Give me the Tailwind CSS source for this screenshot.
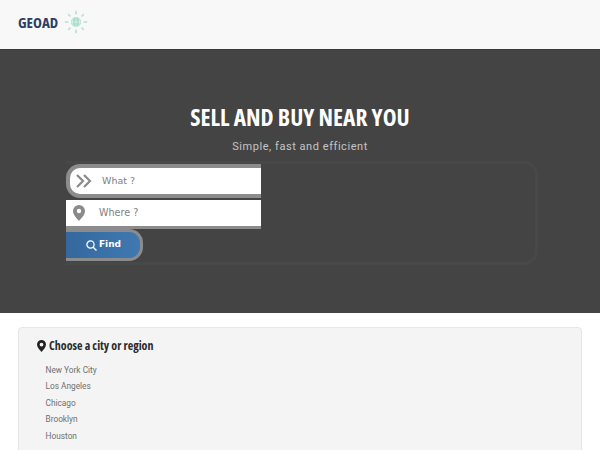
<!DOCTYPE html>
<html lang="en">
<head>
    <meta charset="UTF-8">
    <title>Geoad</title>
    <script src="https://cdn.jsdelivr.net/npm/@tailwindcss/browser@4"></script>
</head>
<body class="bg-white font-['Roboto',sans-serif] h-[450px] overflow-hidden">
    <!-- Header -->
    <div class="h-[49px] bg-[#f8f8f8] flex items-center pb-[5px] pl-[18px] gap-[6px]">
        <span class="font-['Open_Sans',sans-serif] [font-stretch:75%] font-bold text-[15px] text-[#2c3e63] leading-none">GEOAD</span>
        <svg width="24" height="24" viewBox="0 0 26 26" fill="none" stroke="#b5e2d2" stroke-width="1.800" stroke-linecap="round">
            <circle cx="13" cy="13" r="5.500" fill="#a5dcc9" stroke="none"/>
            <path d="M7.500 13h11M13 7.500v11M10 9c-1.500 2.500-1.500 5.500 0 8M16 9c1.500 2.500 1.500 5.500 0 8" stroke="#eef8f4" stroke-width=".7"/>
            <path d="M13 1.500v2.500M13 22v2.500M1.500 13h2.500M22 13h2.500M5 5l1.500 1.500M19.500 19.500L21 21M21 5l-1.500 1.500M6.500 19.500L5 21"/>
        </svg>
    </div>

    <!-- Hero -->
    <div class="h-[264px] bg-[#444444] border-t border-[#3a3a3a] flex flex-col items-center">
        <h1 class="mt-[52px] font-['Open_Sans',sans-serif] [font-stretch:75%] font-bold text-[23.400px] leading-[30px] text-white">SELL AND BUY NEAR YOU</h1>
        <p class="mt-[6px] font-['Roboto',sans-serif] text-[11px] tracking-[0.55px] leading-[18px] text-[#c4c4c4]">Simple, fast and efficient</p>

        <!-- Search form -->
        <div class="mt-[5px] w-[472px] h-[104px] border-[3px] border-l-0 border-[#464947] rounded-r-[14px] flex flex-col items-start self-start ml-[66px]">
            <div class="w-[195px] h-[34px] bg-white border-[4px] border-r-0 border-[#8c8c8c] rounded-l-[14px] flex items-center pl-[6px] gap-[10px]">
                <svg width="16" height="14" viewBox="0 0 16 14" fill="none" stroke="#8a8a8a" stroke-width="2.200">
                    <path d="M1 1l6 6-6 6M8 1l6 6-6 6"/>
                </svg>
                <span class="font-['DejaVu_Sans',sans-serif] text-[9.500px] text-[#808080]">What ?</span>
            </div>
            <div class="mt-[2px] w-[195px] h-[29px] bg-white border-b-[3px] border-[#8c8c8c] flex items-center pl-[7px] gap-[14px]">
                <svg width="12" height="16" viewBox="0 0 12 16" fill="#8a8a8a">
                    <path fill-rule="evenodd" d="M6 0a6 6 0 0 1 6 6c0 3.500-3.500 7-6 10C3.500 13 0 9.500 0 6a6 6 0 0 1 6-6zm0 3.800a2.200 2.200 0 1 0 0 4.400 2.200 2.200 0 0 0 0-4.400z"/>
                </svg>
                <span class="font-['DejaVu_Sans',sans-serif] text-[9.600px] text-[#808080]">Where ?</span>
            </div>
            <div class="w-[77px] h-[32px] bg-gradient-to-r from-[#34689f] to-[#3f79b0] border-[3px] border-l-0 border-[#8c8c8c] rounded-r-[14px] flex items-center justify-center gap-[2px] pl-[1px] text-white">
                <svg width="11" height="11" viewBox="0 0 11 11" fill="none" stroke="white" stroke-width="1.300">
                    <circle cx="4.500" cy="4.500" r="3.600"/>
                    <path d="M7.200 7.200l3.300 3.300"/>
                </svg>
                <span class="font-['DejaVu_Sans',sans-serif] font-bold text-[9px]">Find</span>
            </div>
        </div>
    </div>

    <!-- Cities -->
    <div class="mt-[14px] ml-[18px] w-[564px] h-[140px] bg-[#f4f4f4] border border-[#e6e6e6] rounded-[4px] pt-[10px] pl-[18px]">
        <div class="flex items-center gap-[3px]">
            <svg width="9" height="12" viewBox="0 0 12 16" fill="#222222">
                <path fill-rule="evenodd" d="M6 0a6 6 0 0 1 6 6c0 3.500-3.500 7-6 10C3.500 13 0 9.500 0 6a6 6 0 0 1 6-6zm0 3.500a2.500 2.500 0 1 0 0 5 2.500 2.500 0 0 0 0-5z"/>
            </svg>
            <h2 class="font-['Open_Sans',sans-serif] [font-stretch:75%] font-bold text-[12px] leading-[16px] text-[#2a2a2a]">Choose a city or region</h2>
        </div>
        <ul class="mt-[8px] pl-[8.500px] flex flex-col text-[8.300px] leading-[16.400px] text-[#6f6f6f]">
            <li>New York City</li>
            <li>Los Angeles</li>
            <li>Chicago</li>
            <li>Brooklyn</li>
            <li>Houston</li>
        </ul>
    </div>
</body>
</html>
